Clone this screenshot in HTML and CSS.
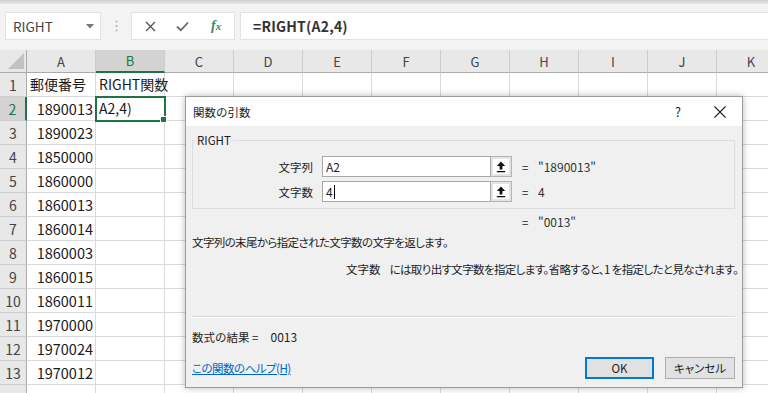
FILE: index.html
```html
<!DOCTYPE html>
<html lang="ja">
<head>
<meta charset="utf-8">
<title>関数の引数</title>
<link rel="stylesheet" href="styles.css">
</head>
<body>
<div class="app">
  <div class="topband"></div>
  <div class="fbar">
    <div class="namebox"><span>RIGHT</span><svg class="caret" width="8" height="5" viewBox="0 0 8 5"><path d="M0 0H8L4 4.5Z" fill="#777"/></svg></div>
    <div class="grip"><svg width="3" height="12" viewBox="0 0 3 12"><circle cx="1.5" cy="1.5" r="1" fill="#b0b0b0"/><circle cx="1.5" cy="6" r="1" fill="#b0b0b0"/><circle cx="1.5" cy="10.5" r="1" fill="#b0b0b0"/></svg></div>
    <div class="fxbox">
      <svg class="ic-x" width="11" height="11" viewBox="0 0 11 11"><path d="M1 1L10 10M10 1L1 10" stroke="#555" stroke-width="1.4" fill="none"/></svg>
      <svg class="ic-ok" width="13" height="11" viewBox="0 0 13 11"><path d="M1 5.5L4.8 9.3L12 1.5" stroke="#666" stroke-width="1.8" fill="none"/></svg>
      <span class="fx"><i>f</i><i class="sub">x</i></span>
    </div>
    <div class="formula">=RIGHT(A2,4)</div>
  </div>

  <div class="sheet">
    <div class="corner"><svg width="27" height="23" viewBox="0 0 27 23"><path d="M24 3V19H8Z" fill="#c2c2c2"/></svg></div>
    <div class="ch">A</div><div class="ch sel">B</div><div class="ch">C</div><div class="ch">D</div><div class="ch">E</div><div class="ch">F</div><div class="ch">G</div><div class="ch">H</div><div class="ch">I</div><div class="ch">J</div><div class="ch">K</div>

    <div class="rh">1</div><div class="c">郵便番号</div><div class="c">RIGHT関数</div><div class="c"></div><div class="c"></div><div class="c"></div><div class="c"></div><div class="c"></div><div class="c"></div><div class="c"></div><div class="c"></div><div class="c"></div>
    <div class="rh sel">2</div><div class="c num">1890013</div><div class="c active">A2,4)</div><div class="c"></div><div class="c"></div><div class="c"></div><div class="c"></div><div class="c"></div><div class="c"></div><div class="c"></div><div class="c"></div><div class="c"></div>
    <div class="rh">3</div><div class="c num">1890023</div><div class="c"></div><div class="c"></div><div class="c"></div><div class="c"></div><div class="c"></div><div class="c"></div><div class="c"></div><div class="c"></div><div class="c"></div><div class="c"></div>
    <div class="rh">4</div><div class="c num">1850000</div><div class="c"></div><div class="c"></div><div class="c"></div><div class="c"></div><div class="c"></div><div class="c"></div><div class="c"></div><div class="c"></div><div class="c"></div><div class="c"></div>
    <div class="rh">5</div><div class="c num">1860000</div><div class="c"></div><div class="c"></div><div class="c"></div><div class="c"></div><div class="c"></div><div class="c"></div><div class="c"></div><div class="c"></div><div class="c"></div><div class="c"></div>
    <div class="rh">6</div><div class="c num">1860013</div><div class="c"></div><div class="c"></div><div class="c"></div><div class="c"></div><div class="c"></div><div class="c"></div><div class="c"></div><div class="c"></div><div class="c"></div><div class="c"></div>
    <div class="rh">7</div><div class="c num">1860014</div><div class="c"></div><div class="c"></div><div class="c"></div><div class="c"></div><div class="c"></div><div class="c"></div><div class="c"></div><div class="c"></div><div class="c"></div><div class="c"></div>
    <div class="rh">8</div><div class="c num">1860003</div><div class="c"></div><div class="c"></div><div class="c"></div><div class="c"></div><div class="c"></div><div class="c"></div><div class="c"></div><div class="c"></div><div class="c"></div><div class="c"></div>
    <div class="rh">9</div><div class="c num">1860015</div><div class="c"></div><div class="c"></div><div class="c"></div><div class="c"></div><div class="c"></div><div class="c"></div><div class="c"></div><div class="c"></div><div class="c"></div><div class="c"></div>
    <div class="rh">10</div><div class="c num">1860011</div><div class="c"></div><div class="c"></div><div class="c"></div><div class="c"></div><div class="c"></div><div class="c"></div><div class="c"></div><div class="c"></div><div class="c"></div><div class="c"></div>
    <div class="rh">11</div><div class="c num">1970000</div><div class="c"></div><div class="c"></div><div class="c"></div><div class="c"></div><div class="c"></div><div class="c"></div><div class="c"></div><div class="c"></div><div class="c"></div><div class="c"></div>
    <div class="rh">12</div><div class="c num">1970024</div><div class="c"></div><div class="c"></div><div class="c"></div><div class="c"></div><div class="c"></div><div class="c"></div><div class="c"></div><div class="c"></div><div class="c"></div><div class="c"></div>
    <div class="rh">13</div><div class="c num">1970012</div><div class="c"></div><div class="c"></div><div class="c"></div><div class="c"></div><div class="c"></div><div class="c"></div><div class="c"></div><div class="c"></div><div class="c"></div><div class="c"></div>
    <div class="rh"></div><div class="c"></div><div class="c"></div><div class="c"></div><div class="c"></div><div class="c"></div><div class="c"></div><div class="c"></div><div class="c"></div><div class="c"></div><div class="c"></div><div class="c"></div>
  </div>

  <div class="dialog">
    <div class="dtitle">
      <span class="dtext">関数の引数</span>
      <div class="tbtns">
        <span class="q">?</span>
        <svg width="12" height="12" viewBox="0 0 12 12"><path d="M0.5 0.5L11.5 11.5M11.5 0.5L0.5 11.5" stroke="#222" stroke-width="1.1" fill="none"/></svg>
      </div>
    </div>
    <div class="dbody">
      <fieldset class="group">
        <legend>RIGHT</legend>
        <div class="arg">
          <span class="lbl">文字列</span>
          <div class="inp">A2</div>
          <span class="ref"><svg width="10" height="12" viewBox="0 0 10 12"><path d="M5 0.5L0.8 5H3.6V8.6H6.4V5H9.2Z" fill="#111"/><rect x="0.8" y="10" width="8.4" height="1.3" fill="#111"/></svg></span>
          <span class="eq">=</span><span class="val">"1890013"</span>
        </div>
        <div class="arg">
          <span class="lbl">文字数</span>
          <div class="inp">4<span class="cursor"></span></div>
          <span class="ref"><svg width="10" height="12" viewBox="0 0 10 12"><path d="M5 0.5L0.8 5H3.6V8.6H6.4V5H9.2Z" fill="#111"/><rect x="0.8" y="10" width="8.4" height="1.3" fill="#111"/></svg></span>
          <span class="eq">=</span><span class="val">4</span>
        </div>
      </fieldset>
      <div class="total"><span class="eq">=</span><span class="val">"0013"</span></div>
      <p class="desc">文字列の末尾から指定された文字数の文字を返します。</p>
      <p class="argdesc"><span class="an">文字数</span>には取り出す文字数を指定します。省略すると、1 を指定したと見なされます。</p>
      <div class="sep"></div>
      <div class="result">数式の結果 =<span class="rv">0013</span></div>
      <div class="foot">
        <a class="help" href="#">この関数のヘルプ(H)</a>
        <div class="btns">
          <button class="btn ok">OK</button>
          <button class="btn">キャンセル</button>
        </div>
      </div>
    </div>
  </div>
</div>
</body>
</html>
```

FILE: styles.css
```css
* { box-sizing: border-box; margin: 0; padding: 0; }
html, body { width: 768px; height: 393px; overflow: hidden; }
body {
  font-family: "Noto Sans CJK JP", "Noto Sans", sans-serif;
  background: #f3f3f3;
  color: #222;
}
.app { position: relative; width: 768px; height: 393px; overflow: hidden; background: #f3f3f3; }

.topband { height: 4px; background: linear-gradient(#cdcdcd, #e9e9e9); }

.fbar { display: flex; height: 28px; margin-top: 8px; }
.namebox {
  width: 96px; margin-left: 5px; background: #fff; border: 1px solid #e2e2e2;
  display: flex; align-items: center; justify-content: space-between;
  padding: 0 6px 0 7px; font-size: 13.5px; color: #444;
}
.grip { width: 30px; display: flex; align-items: center; justify-content: center; }
.fxbox {
  width: 104px; background: #fff; border: 1px solid #e2e2e2;
  display: flex; align-items: center; padding-left: 13px;
}
.ic-x { margin-right: 20px; }
.ic-ok { margin-right: 22px; }
.fx { color: #3d8a4f; font-family: "Liberation Serif", serif; font-size: 14px; font-weight: bold; }
.fx .sub { font-size: 11px; }
.formula {
  flex: 1; margin-left: 5px; background: #fff; border: 1px solid #e2e2e2; border-right: none;
  font-weight: bold; font-size: 14px; color: #333; padding-left: 12px; letter-spacing: 0.2px;
  display: flex; align-items: center;
}

.sheet {
  margin-top: 10px;
  display: grid;
  grid-template-columns: 27px repeat(11, 69px);
  grid-template-rows: 23px repeat(14, 24px);
  background: #fff;
}
.corner { background: #e8e8e8; border-right: 1px solid #ababab; border-bottom: 1px solid #ababab; }
.corner svg { display: block; }
.ch {
  background: #e8e8e8; border-right: 1px solid #cdcdcd; border-bottom: 1px solid #ababab;
  display: flex; align-items: center; justify-content: center;
  font-size: 13px; color: #444;
}
.ch.sel { background: #d3d3d3; color: #217346; border-bottom: 2px solid #217346; }
.rh {
  background: #e8e8e8; border-right: 1px solid #ababab; border-bottom: 1px solid #cdcdcd;
  display: flex; align-items: center; justify-content: center;
  font-size: 14px; color: #444;
}
.rh.sel { background: #d3d3d3; color: #217346; border-right: 2px solid #217346; }
.c {
  border-right: 1px solid #dadada; border-bottom: 1px solid #dadada;
  font-size: 14px; line-height: 23px; padding: 0 3px; white-space: nowrap; color: #1a1a1a;
  overflow: visible;
}
.c.num { text-align: right; padding-right: 2px; font-size: 14.5px; }
.c.active { position: relative; outline: 2px solid #217346; outline-offset: -1px; z-index: 2; }
.c.active::after {
  content: ""; position: absolute; right: -3px; bottom: -3px; width: 5px; height: 5px;
  background: #217346; border: 1px solid #fff;
}

.dialog {
  position: absolute; left: 185px; top: 96px; width: 558px; height: 292px;
  background: #f0f0f0; border: 1px solid #9c9c9c;
  box-shadow: 0 0 7px rgba(0, 0, 0, 0.28);
  font-size: 11.5px; color: #1e1e1e; z-index: 5;
}
.dtitle {
  height: 29px; background: #fff; display: flex; align-items: center; justify-content: space-between;
  padding-left: 7px;
}
.dtext { font-size: 11.5px; }
.tbtns { display: flex; align-items: center; }
.q { font-size: 12.5px; margin-right: 33px; color: #222; }
.tbtns svg { margin-right: 16px; display: block; }

.dbody { padding: 0 7px 0 6px; }
.group {
  margin-top: 6px; border: 1px solid #dcdcdc; padding: 8px 0 6px 0; min-width: 0;
}
.group legend { margin-left: 2px; padding: 0 2px; line-height: 16px; font-size: 11.5px; }
.arg { display: flex; align-items: center; height: 21px; }
.arg + .arg { margin-top: 4px; }
.lbl { width: 120px; text-align: right; }
.inp {
  width: 169px; height: 21px; margin-left: 9px; background: #fff; border: 1px solid #a8a8a8;
  display: flex; align-items: center; padding-left: 3px; font-size: 12px;
}
.cursor { display: inline-block; width: 1px; height: 14px; background: #000; margin-left: 1px; }
.ref {
  width: 21px; height: 21px; background: #fff; border: 1px solid #b4b4b4; border-left: none;
  box-shadow: inset 0 0 0 2px #e4e4e4;
  display: flex; align-items: center; justify-content: center;
}
.ref svg { display: block; }
.eq { margin-left: 10px; width: 16px; }
.val { font-size: 12px; color: #333; }

.total { padding-left: 330px; margin-top: 5px; line-height: 16px; display: flex; }
.total .eq { margin-left: 0; }
.desc { margin-top: 4px; line-height: 16px; font-feature-settings: "palt"; letter-spacing: -0.62px; }
.argdesc { margin-top: 11px; line-height: 16px; padding-left: 154px; font-feature-settings: "palt"; letter-spacing: -0.62px; white-space: nowrap; }
.an { margin-right: 9px; letter-spacing: 0; }
.sep { margin-top: 39px; height: 2px; border-top: 1px solid #d8d8d8; border-bottom: 1px solid #fbfbfb; }
.result { margin-top: 11px; line-height: 16px; }
.rv { margin-left: 12px; font-size: 12px; }
.foot { display: flex; align-items: center; justify-content: space-between; margin-top: 12px; height: 22px; }
.help { color: #0066cc; text-decoration: underline; font-feature-settings: "palt"; letter-spacing: -0.5px; }
.btns { display: flex; gap: 11px; }
.btn {
  width: 70px; height: 22px; background: #e1e1e1; border: 1px solid #adadad;
  font-family: "Noto Sans CJK JP", "Noto Sans", sans-serif; font-size: 11.5px; color: #1e1e1e;
  font-feature-settings: "palt";
}
.btn.ok { width: 69px; border: 1px solid #0078d7; box-shadow: inset 0 0 0 1px #0078d7; }
```
